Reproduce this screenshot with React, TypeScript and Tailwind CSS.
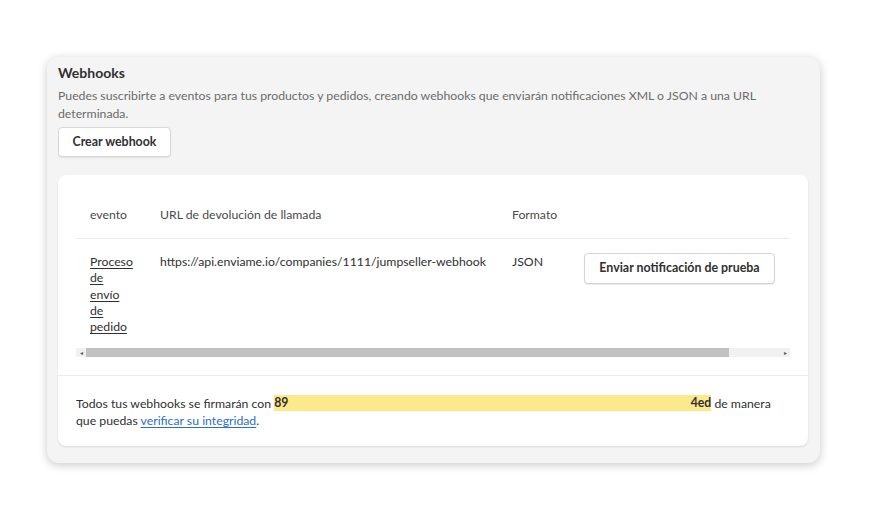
import React from 'react'

const font = { fontFamily: 'Lato, "Open Sans", Arial, sans-serif' }

export default function App() {
    return (
        <div className="min-h-screen bg-white pt-[57px] pl-[47px]" style={font}>
            <div className="w-[773px] h-[406px] rounded-[12px] bg-[#f4f4f4] shadow-[0_2px_10px_rgba(0,0,0,0.22)] px-[11px] pt-[6px]">
                <h2 className="text-[14px] leading-[20px] font-bold text-[#303030]">Webhooks</h2>
                <p className="mt-[4px] text-[12.25px] leading-[18px] text-[#6b6b6b] pr-[40px]">
                    Puedes suscribirte a eventos para tus productos y pedidos, creando webhooks que enviarán notificaciones XML o JSON a una URL determinada.
                </p>
                <button className="mt-[4px] h-[30px] w-[113px] rounded-[4px] bg-white border border-[#d8d8d8] shadow-[0_1px_1px_rgba(0,0,0,0.08)] text-[12.4px] font-bold text-[#303030]">
                    Crear webhook
                </button>

                <div className="mt-[18px] w-[750px] h-[271px] rounded-[8px] bg-white shadow-[0_1px_2px_rgba(0,0,0,0.12)]">
                    <div className="px-[18px] pt-[30px]">
                        {/* cabecera */}
                        <div className="flex text-[12.25px] leading-[20px] text-[#4a4a4a] pb-[13px] border-b border-[#ebebeb]">
                            <div className="w-[84px] pl-[14px]">evento</div>
                            <div className="w-[352px]">URL de devolución de llamada</div>
                            <div className="w-[72px]">Formato</div>
                            <div className="flex-1"></div>
                        </div>

                        {/* fila */}
                        <div className="flex text-[12.25px] leading-[16.3px] text-[#303030] pt-[15px]">
                            <div className="w-[84px] pl-[14px]">
                                <a href="#" className="underline underline-offset-2 text-[#303030]">
                                    Proceso<br />de<br />envío<br />de<br />pedido
                                </a>
                            </div>
                            <div className="w-[352px] whitespace-nowrap">https://api.enviame.io/companies/1111/jumpseller-webhook</div>
                            <div className="w-[72px]">JSON</div>
                            <div className="flex-1">
                                <button className="-mt-[1px] h-[31px] w-[191px] rounded-[4px] bg-white border border-[#d4d4d4] shadow-[0_1px_1px_rgba(0,0,0,0.08)] text-[12.4px] font-bold text-[#303030]">
                                    Enviar notificación de prueba
                                </button>
                            </div>
                        </div>

                        {/* barra de desplazamiento */}
                        <div className="mt-[13px] h-[9px] bg-[#f1f1f1] flex items-center">
                            <div className="w-[10px] flex justify-center text-[6px] leading-none text-[#555]">◂</div>
                            <div className="w-[643px] h-[9px] bg-[#c1c1c1]"></div>
                            <div className="flex-1"></div>
                            <div className="w-[10px] flex justify-center text-[6px] leading-none text-[#555]">▸</div>
                        </div>
                    </div>

                    <div className="mt-[18px] border-t border-[#ebebeb] px-[18px] pt-[19px] text-[12.25px] leading-[17px] text-[#303030]">
                        <p>
                            Todos tus webhooks se firmarán con{' '}
                            <span className="inline-flex justify-between w-[437px] bg-[#fbe98b] font-bold leading-[16px] align-top">
                                <span>89</span>
                                <span>4ed</span>
                            </span>{' '}
                            de manera<br />
                            que puedas{' '}
                            <a href="#" className="text-[#2c6ecb] underline underline-offset-2">verificar su integridad</a>.
                        </p>
                    </div>
                </div>
            </div>
        </div>
    )
}
